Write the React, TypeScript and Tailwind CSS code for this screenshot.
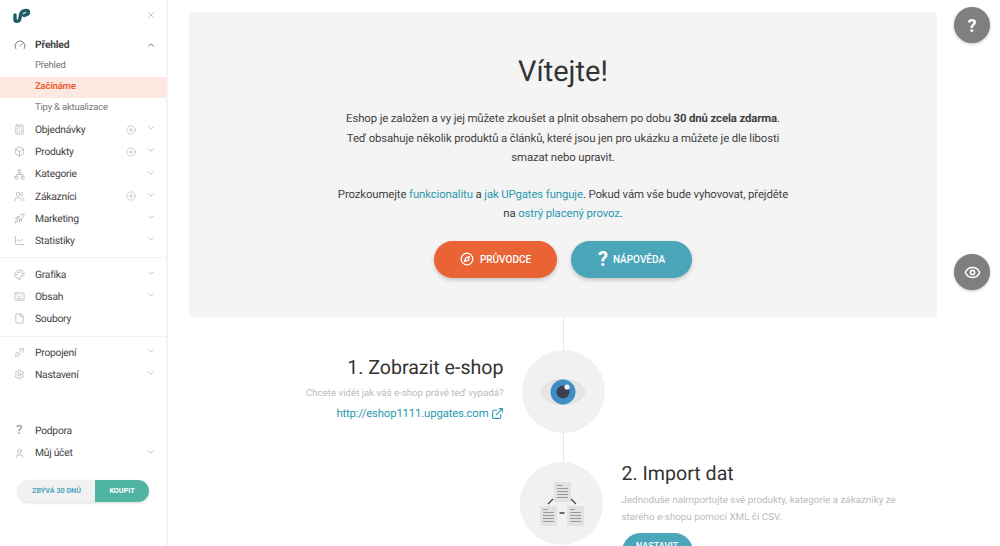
import {
  Box,
  Calculator,
  ChevronDown,
  ChevronUp,
  Compass,
  ExternalLink,
  Eye,
  File,
  Gauge,
  Keyboard,
  ChartLine,
  Network,
  Palette,
  CirclePlus,
  Rocket,
  Settings,
  Unplug,
  User,
  Users,
  X,
} from 'lucide-react'
import type { LucideIcon } from 'lucide-react'

interface NavItem {
  label: string
  icon: LucideIcon
  plus?: boolean
  chevron?: boolean
}

const mainItems: NavItem[] = [
  { label: 'Objednávky', icon: Calculator, plus: true, chevron: true },
  { label: 'Produkty', icon: Box, plus: true, chevron: true },
  { label: 'Kategorie', icon: Network, chevron: true },
  { label: 'Zákazníci', icon: Users, plus: true, chevron: true },
  { label: 'Marketing', icon: Rocket, chevron: true },
  { label: 'Statistiky', icon: ChartLine, chevron: true },
]

const contentItems: NavItem[] = [
  { label: 'Grafika', icon: Palette, chevron: true },
  { label: 'Obsah', icon: Keyboard, chevron: true },
  { label: 'Soubory', icon: File },
]

const settingItems: NavItem[] = [
  { label: 'Propojení', icon: Unplug, chevron: true },
  { label: 'Nastavení', icon: Settings, chevron: true },
]

function NavRow({ item }: { item: NavItem }) {
  const Icon = item.icon
  return (
    <div className="flex h-[22.2px] items-center pl-[14px] pr-[10px] text-[10.300px] tracking-[-0.25px] text-[#444]">
      <span className="flex w-[21px] shrink-0">
        <Icon size={11} strokeWidth={1.5} className="text-[#a8a8a8]" />
      </span>
      <span className="flex-1">{item.label}</span>
      {item.plus && <CirclePlus size={10} strokeWidth={1.2} className="mr-[10px] text-[#a0a0a0]" />}
      {item.chevron && <ChevronDown size={10} strokeWidth={1.5} className="-mt-[3px] text-[#a0a0a0]" />}
    </div>
  )
}

function Sidebar() {
  return (
    <aside className="flex h-[546px] w-[168px] shrink-0 flex-col border-r-2 border-[#f3f3f3]">
      <div className="flex h-[34px] items-start justify-between pl-[12px] pr-[10px] pt-[8px]">
        <svg width="19" height="16" viewBox="0 0 19 16" fill="none">
          <path
            d="M3 7v5c0 1.500 4 1.800 4.500 0L9 5.500c.5-3 7-4 7.500-1.500.3 2-2 3-4.500 3.500"
            stroke="#1f5c68"
            strokeWidth="3.400"
            strokeLinecap="round"
          />
        </svg>
        <X size={10} strokeWidth={1.5} className="mt-[2px] text-[#a8a8a8]" />
      </div>

      <div className="flex h-[22px] items-center pl-[14px] pr-[10px] text-[10.300px] font-bold tracking-[-0.2px] text-[#444]">
        <Gauge size={12} strokeWidth={1.5} className="mr-[9px] shrink-0 text-[#555]" />
        <span className="flex-1">Přehled</span>
        <ChevronUp size={10} strokeWidth={2} className="text-[#555]" />
      </div>
      <div className="flex h-[21px] items-center pl-[35px] text-[9.500px] tracking-[-0.2px] text-[#777]">Přehled</div>
      <div className="flex h-[21px] items-center bg-[#fce8e1] pl-[35px] text-[9.500px] font-bold tracking-[-0.2px] text-[#ec6337]">Začínáme</div>
      <div className="flex h-[21px] items-center pl-[35px] text-[9.500px] tracking-[-0.2px] text-[#777]">Tipy & aktualizace</div>

      <div className="-mt-[0.4px] border-b border-[#f3f3f3] pb-[5.400px]">
        {mainItems.map((item) => (
          <NavRow key={item.label} item={item} />
        ))}
      </div>
      <div className="border-b border-[#f3f3f3] pb-[6px] pt-[5.300px]">
        {contentItems.map((item) => (
          <NavRow key={item.label} item={item} />
        ))}
      </div>
      <div className="pt-[4.500px]">
        {settingItems.map((item) => (
          <NavRow key={item.label} item={item} />
        ))}
      </div>

      <div className="mt-[34px]">
        <div className="flex h-[22.2px] items-center pl-[14px] text-[10.300px] tracking-[-0.25px] text-[#444]">
          <span className="w-[21px] pl-[2px] text-[13px] font-bold leading-none text-[#aaa]">?</span>
          Podpora
        </div>
        <NavRow item={{ label: 'Můj účet', icon: User, chevron: true }} />
      </div>

      <div className="ml-[18px] mt-[16px] flex h-[22px] w-[131px] overflow-hidden rounded-full bg-[#f1f1f1] text-[7.200px] font-bold shadow-[0_1px_3px_rgba(0,0,0,0.15)]">
        <span className="flex w-[77px] items-center justify-center text-[#4ba6b8]">ZBÝVÁ 30 DNŮ</span>
        <span className="flex flex-1 items-center justify-center bg-[#4fb3a2] text-white">KOUPIT</span>
      </div>
    </aside>
  )
}

function EyeArt() {
  return (
    <svg width="46" height="46" viewBox="0 0 46 46">
      <path d="M1 23C8 6 38 6 45 23 38 40 8 40 1 23Z" fill="#e6e6e6" stroke="#dcdcdc" />
      <circle cx="23" cy="23" r="12.5" fill="#3f8fc6" />
      <circle cx="23" cy="23" r="6.5" fill="#3b3f4d" />
      <circle cx="27" cy="18" r="2.6" fill="#f3f3f3" />
    </svg>
  )
}

function Doc({ className }: { className: string }) {
  return (
    <div className={`flex h-[20px] w-[17px] flex-col gap-[2px] bg-[#e2e2e2] px-[3px] pt-[3px] ${className}`}>
      <span className="h-px w-[5px] bg-[#999]" />
      <span className="h-px bg-[#999]" />
      <span className="h-px bg-[#999]" />
      <span className="h-px bg-[#999]" />
      <span className="h-px bg-[#999]" />
    </div>
  )
}

function ImportArt() {
  return (
    <div className="relative h-[44px] w-[44px]">
      <Doc className="absolute left-[14px] top-0" />
      <Doc className="absolute left-0 bottom-0" />
      <Doc className="absolute right-0 bottom-0" />
      <svg width="44" height="44" viewBox="0 0 44 44" className="absolute left-0 top-0">
        <path d="M8 22l5-5M31 17l5 5M19.500 31h5" stroke="#444" strokeWidth="1.300" />
      </svg>
    </div>
  )
}

export default function App() {
  return (
    <div
      className="relative flex h-[546px] w-[1000px] overflow-hidden bg-white [text-rendering:geometricPrecision]"
      style={{ fontFamily: 'Roboto, sans-serif' }}
    >
      <Sidebar />

      <main className="ml-[21px] w-[748px] shrink-0 pt-[12px]">
        <section className="flex h-[305px] flex-col items-center rounded-[3px] bg-[#f4f4f4] pt-[40px]">
          <h1 className="text-[29px] leading-[40px] text-[#333]">Vítejte!</h1>
          <p className="mt-[17px] w-[480px] text-center text-[11.400px] leading-[19.500px] tracking-[-0.13px] text-[#444]">
            Eshop je založen a vy jej můžete zkoušet a plnit obsahem po dobu <b>30 dnů zcela zdarma</b>.
            <br />
            Teď obsahuje několik produktů a článků, které jsou jen pro ukázku a můžete je dle libosti
            <br />
            smazat nebo upravit.
          </p>
          <p className="mt-[17px] w-[480px] text-center text-[11.400px] leading-[19.500px] tracking-[-0.13px] text-[#444]">
            Prozkoumejte <a className="text-[#2e9bb0]">funkcionalitu</a> a <a className="text-[#2e9bb0]">jak UPgates funguje</a>. Pokud vám vše bude vyhovovat, přejděte
            <br />
            na <a className="text-[#2e9bb0]">ostrý placený provoz</a>.
          </p>
          <div className="mt-[17px] flex gap-[14px]">
            <button className="flex h-[37px] w-[123px] items-center justify-center gap-[6px] rounded-full bg-[#ea6335] text-[10px] font-medium text-white shadow-[0_2px_4px_rgba(0,0,0,0.2)]">
              <Compass size={14} strokeWidth={2.2} />
              PRŮVODCE
            </button>
            <button className="flex h-[37px] w-[121px] items-center justify-center gap-[5px] rounded-full bg-[#4ba6b9] text-[10px] font-medium text-white shadow-[0_2px_4px_rgba(0,0,0,0.2)]">
              <span className="text-[20px] font-bold leading-none">?</span>
              NÁPOVĚDA
            </button>
          </div>
        </section>

        <div className="grid grid-cols-[1fr_83px_1fr] gap-x-[18px]">
          <div className="flex flex-col items-end pt-[34px] text-right">
            <h2 className="text-[19.600px] leading-[34px] text-[#333]">1. Zobrazit e-shop</h2>
            <p className="mt-[1px] text-[9.700px] leading-[16px] text-[#bbb]">Chcete vidět jak váš e-shop právě teď vypadá?</p>
            <a className="mt-[1px] flex items-center gap-[2px] text-[11.400px] leading-[20px] tracking-[-0.18px] text-[#2e9bb0]">
              http://eshop1111.upgates.com
              <ExternalLink size={13} strokeWidth={2} />
            </a>
          </div>
          <div className="flex flex-col items-center">
            <span className="h-[33px] w-px bg-[#e6e6e6]" />
            <div className="flex h-[83px] w-[83px] shrink-0 items-center justify-center rounded-full bg-[#f1f1f1]">
              <EyeArt />
            </div>
            <span className="h-[29px] w-px bg-[#e6e6e6]" />
            <div className="-ml-[3px] flex h-[83px] w-[83px] shrink-0 items-center justify-center rounded-full bg-[#f1f1f1]">
              <ImportArt />
            </div>
          </div>
          <div className="-ml-[1px] flex flex-col items-start pt-[141px]">
            <h2 className="text-[19.600px] leading-[32px] text-[#333]">2. Import dat</h2>
            <p className="mt-[2px] w-[290px] text-[9.800px] leading-[17px] text-[#bbb]">
              Jednoduše naimportujte své produkty, kategorie a zákazníky ze starého e-shopu pomocí XML či CSV.
            </p>
            <button className="mt-[7px] h-[37px] w-[71px] rounded-full bg-[#4ba6b9] pb-[10px] pt-0 text-[9px] font-medium text-white">NASTAVIT</button>
          </div>
        </div>
      </main>

      <button className="absolute left-[954px] top-[7px] flex h-[36px] w-[36px] items-center justify-center rounded-full bg-[#7f7f7f] text-[18px] font-bold text-white shadow-[0_1px_3px_rgba(0,0,0,0.25)]">
        ?
      </button>
      <button className="absolute left-[954px] top-[254px] flex h-[36px] w-[36px] items-center justify-center rounded-full bg-[#7f7f7f] text-white shadow-[0_1px_3px_rgba(0,0,0,0.25)]">
        <Eye size={17} strokeWidth={2.2} />
      </button>
    </div>
  )
}
